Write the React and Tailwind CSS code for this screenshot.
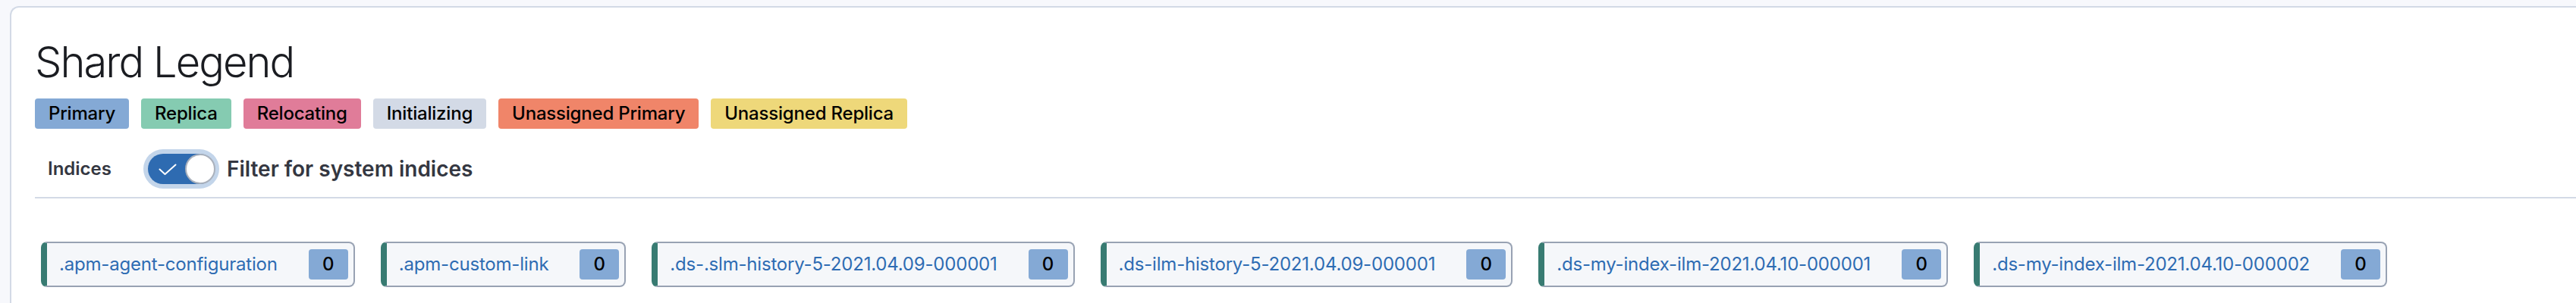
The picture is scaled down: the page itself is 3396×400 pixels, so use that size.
import React from 'react';

// Legend entries for the shard states
const LEGEND = [
  { label: 'Primary', color: 'bg-[#84a9d5]' },
  { label: 'Replica', color: 'bg-[#85cbb1]' },
  { label: 'Relocating', color: 'bg-[#e07c99]' },
  { label: 'Initializing', color: 'bg-[#d3dae6]' },
  { label: 'Unassigned Primary', color: 'bg-[#f08569]' },
  { label: 'Unassigned Replica', color: 'bg-[#eed87a]' },
];

const INDICES = [
  '.apm-agent-configuration',
  '.apm-custom-link',
  '.ds-.slm-history-5-2021.04.09-000001',
  '.ds-ilm-history-5-2021.04.09-000001',
  '.ds-my-index-ilm-2021.04.10-000001',
  '.ds-my-index-ilm-2021.04.10-000002',
];

const Toggle = () => (
  <div className="relative flex items-center w-[88px] h-10 rounded-full bg-[#2e6bb1] shadow-[0_0_0_6px_#c3d5ea]">
    <svg
      width="24"
      height="16"
      viewBox="0 0 24 16"
      className="absolute left-[14px] top-[13px]"
    >
      <polyline
        points="1.5,7.5 8.5,14 22.5,1.5"
        fill="none"
        stroke="white"
        strokeWidth="2"
        strokeLinecap="round"
        strokeLinejoin="round"
      />
    </svg>
    <div className="ml-auto -mr-px w-10 h-10 rounded-full bg-white border-2 border-[#aab1bc]" />
  </div>
);

const IndexCard = ({ name }) => (
  <div className="flex items-center h-[60px] bg-[#f5f7fa] border-2 border-[#98a2b3] border-l-[8px] border-l-[#387b72] rounded-[8px] pl-4 pr-[7px]">
    <span className="text-[24px] leading-none tracking-[-0.2px] text-[#2e6cb3] whitespace-nowrap">{name}</span>
    <span className="ml-[41px] flex items-center justify-center w-[52px] h-10 rounded-[4px] bg-[#84a9d5] text-[24px] font-medium text-black">
      0
    </span>
  </div>
);

const App = () => {
  return (
    <div className="min-h-[400px] h-[400px] overflow-hidden bg-[#f7f8fc] pt-2 pl-[13px] font-['Inter',sans-serif]">
      <div className="h-full bg-white border-l-2 border-t-2 border-[#d3dae6] rounded-tl-[12px] pl-[31px] pt-[40px]">
        <h1 className="text-[56px] leading-[64px] font-light tracking-[-0.035em] text-[#1a1c21]">Shard Legend</h1>

        {/* Legend */}
        <div className="flex gap-4 mt-4">
          {LEGEND.map((item) => (
            <span
              key={item.label}
              className={`h-10 px-[18px] rounded-[4px] text-[24px] leading-[40px] font-medium tracking-[-0.2px] text-black whitespace-nowrap ${item.color}`}
            >
              {item.label}
            </span>
          ))}
        </div>

        {/* Filter row */}
        <div className="flex items-center mt-8 pl-[17px]">
          <span className="text-[24px] font-semibold text-[#343741]">Indices</span>
          <div className="ml-12">
            <Toggle />
          </div>
          <span className="ml-4 text-[28px] font-semibold text-[#343741]">Filter for system indices</span>
        </div>

        <div className="mt-4 h-[2px] bg-[#d3dae6]" />

        {/* Indices */}
        <div className="flex gap-[34px] mt-[57px] pl-2">
          {INDICES.map((name) => (
            <IndexCard key={name} name={name} />
          ))}
        </div>
      </div>
    </div>
  );
};

export default App;
